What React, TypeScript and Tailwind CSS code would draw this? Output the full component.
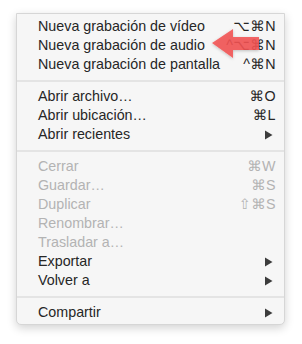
import React from 'react';

type Item =
  | { kind: 'sep' }
  | { kind: 'item'; label: string; shortcut?: string; sub?: boolean; disabled?: boolean };

const ITEMS: Item[] = [
  { kind: 'item', label: 'Nueva grabación de vídeo', shortcut: '⌥⌘N' },
  { kind: 'item', label: 'Nueva grabación de audio', shortcut: '^⌥⌘N' },
  { kind: 'item', label: 'Nueva grabación de pantalla', shortcut: '^⌘N' },
  { kind: 'sep' },
  { kind: 'item', label: 'Abrir archivo…', shortcut: '⌘O' },
  { kind: 'item', label: 'Abrir ubicación…', shortcut: '⌘L' },
  { kind: 'item', label: 'Abrir recientes', sub: true },
  { kind: 'sep' },
  { kind: 'item', label: 'Cerrar', shortcut: '⌘W', disabled: true },
  { kind: 'item', label: 'Guardar…', shortcut: '⌘S', disabled: true },
  { kind: 'item', label: 'Duplicar', shortcut: '⇧⌘S', disabled: true },
  { kind: 'item', label: 'Renombrar…', disabled: true },
  { kind: 'item', label: 'Trasladar a…', disabled: true },
  { kind: 'item', label: 'Exportar', sub: true },
  { kind: 'item', label: 'Volver a', sub: true },
  { kind: 'sep' },
  { kind: 'item', label: 'Compartir', sub: true },
];

const SubArrow: React.FC = () => (
  <svg width="9" height="10" viewBox="0 0 9 10" className="mr-[3px]">
    <path d="M1 0.5 L8.5 5 L1 9.5 Z" fill="#3c3c3c" />
  </svg>
);

const App: React.FC = () => {
  return (
    <div className="relative w-[302px] h-[344px] bg-white pt-[13px] pl-[16px]" style={{ fontFamily: '"Liberation Sans", "DejaVu Sans", sans-serif' }}>
      <div className="w-[269px] bg-[#f6f6f6] border border-[#d6d6d6] rounded-b-[5px] shadow-[0_3px_10px_rgba(0,0,0,0.18)] pt-[3px] pb-[2px]">
        {ITEMS.map((it, i) =>
          it.kind === 'sep' ? (
            <div key={i} className="h-[13px] flex items-center">
              <div className="w-full h-[2px] bg-[#e4e4e4]" />
            </div>
          ) : (
            <div
              key={i}
              className={`h-[19px] flex items-center justify-between pl-[21px] pr-[8px] text-[14.3px] leading-none ${
                it.disabled ? 'text-[#b3b3b3]' : 'text-[#262626]'
              }`}
            >
              <span>{it.label}</span>
              {it.sub ? <SubArrow /> : <span className="tracking-[0.5px]">{it.shortcut}</span>}
            </div>
          )
        )}
      </div>
      <svg className="absolute left-0 top-0" width="302" height="344" viewBox="0 0 302 344">
        <defs>
          <filter id="sh" x="-20%" y="-20%" width="140%" height="140%">
            <feDropShadow dx="0" dy="1" stdDeviation="1.5" floodColor="#000" floodOpacity="0.25" />
          </filter>
        </defs>
        <path
          d="M212 43 L233 29 L233 37 L259 37 L259 50 L233 50 L233 58 Z"
          fill="rgba(242,82,82,0.88)"
          filter="url(#sh)"
        />
      </svg>
    </div>
  );
};

export default App;
